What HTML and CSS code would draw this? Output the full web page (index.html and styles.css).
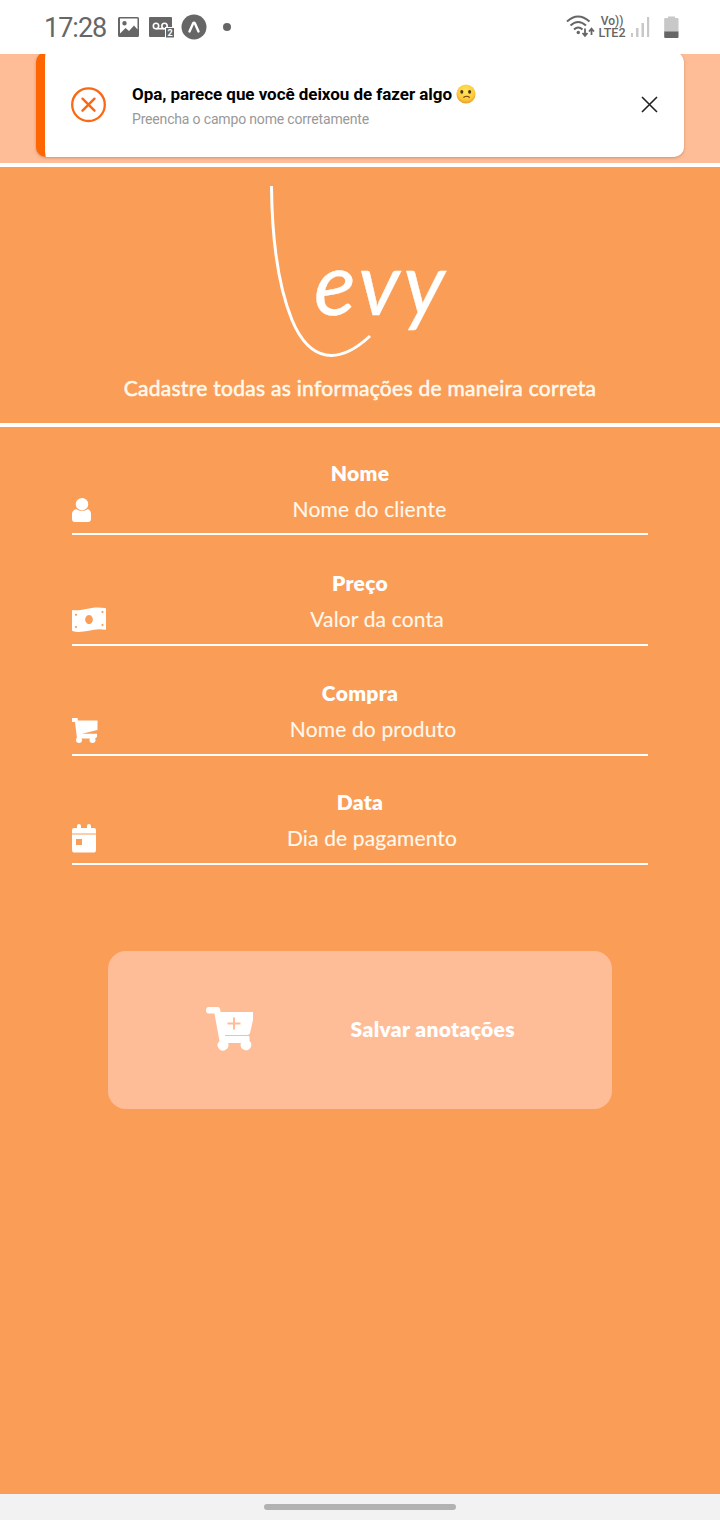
FILE: index.html
```html
<!DOCTYPE html>
<html lang="pt-BR">
<head>
<meta charset="utf-8">
<title>Levy</title>
<link rel="stylesheet" href="styles.css">
</head>
<body>
<div class="screen">
  <div class="status">
    <div class="status-left">
      <span class="clock">17:28</span>
      <svg class="i-image" width="21" height="20" viewBox="0 0 21 20"><path fill="#666" fill-rule="evenodd" d="M1.500 0h18a1.500 1.500 0 0 1 1.500 1.500v17a1.500 1.500 0 0 1-1.500 1.500h-18a1.500 1.500 0 0 1-1.500-1.500v-17a1.500 1.500 0 0 1 1.500-1.500zM2 16.500l5.500-5.500 3.500 3 5-5.500 3.500 4v-11H2zM6.500 4a2.200 2.200 0 1 1 0 4.400 2.200 2.200 0 0 1 0-4.400z"/></svg>
      <svg class="i-vm" width="26" height="22" viewBox="0 0 26 22"><rect width="23" height="20" rx="1" fill="#666"/><g fill="none" stroke="#fff" stroke-width="1.600"><circle cx="7" cy="9" r="2.700"/><circle cx="15.500" cy="9" r="2.700"/><path d="M7 11.700h8.500"/></g><rect x="16.500" y="10.500" width="9" height="10.500" fill="#666" stroke="#fff"/><text x="18.400" y="19.200" class="vm-num">2</text></svg>
      <svg class="i-expo" width="26" height="26" viewBox="0 0 26 26"><circle cx="13" cy="13" r="12.500" fill="#666"/><path d="M8.500 17.500L12 9.500q1-1.500 2 0l3.500 8" fill="none" stroke="#fff" stroke-width="2.400" stroke-linecap="round"/></svg>
      <span class="dot"></span>
    </div>
    <div class="status-right">
      <svg width="29" height="24" viewBox="0 0 29 24" fill="none" stroke="#666" stroke-width="2"><path d="M1 6.500Q12 -3.500 23.500 6.500M4.500 10.500Q12 3.500 20 10.500M8 14.500Q12.300 10.500 16.500 14.500"/><circle cx="12.300" cy="17.500" r="1.700" fill="#666" stroke="none"/><path stroke-width="1.800" d="M19 13.500v7M16.500 18l2.500 2.800 2.500-2.800M25.500 20v-6M23 16.500l2.500-2.800 2.500 2.800"/></svg>
      <div class="lte"><span class="vo">Vo))</span><span>LTE2</span></div>
      <svg class="bars" width="19" height="21" viewBox="0 0 19 21" fill="#c8c8c8"><path d="M0 16h2v4H0zM5 11h2.500v9H5zM10.500 6H13v14h-2.500zM16 0h2.200v20H16z"/></svg>
      <svg class="battery" width="15" height="23" viewBox="0 0 15 23"><path fill="#c8c8c8" d="M4 2V.5h7V2h2.500q1 0 1 1v13H.2V3q0-1 1-1z"/><path fill="#666" d="M.2 15.500h14.300V21q0 1-1 1H1.200q-1 0-1-1z"/></svg>
    </div>
  </div>

  <div class="header">
    <div class="toast">
      <svg class="toast-icon" width="35" height="36" viewBox="0 0 35 36" fill="none" stroke="#fa6814"><circle cx="17.500" cy="17.700" r="16.300" stroke-width="2.300"/><path stroke-width="2.400" stroke-linecap="round" d="M11.500 11.700l12 12M23.500 11.700l-12 12"/></svg>
      <div class="toast-body">
        <div class="toast-title"><span>Opa, parece que você deixou de fazer algo</span>
          <svg class="emoji" width="20" height="20" viewBox="0 0 20 20"><defs><radialGradient id="face" cx=".5" cy=".35" r=".65"><stop offset="0" stop-color="#ffe75a"/><stop offset=".7" stop-color="#fcc83a"/><stop offset="1" stop-color="#e79a2b"/></radialGradient></defs><circle cx="10" cy="10" r="9.600" fill="url(#face)"/><g fill="#46301a"><ellipse cx="5.800" cy="7.800" rx="1.500" ry="1.900"/><ellipse cx="13.600" cy="7.800" rx="1.500" ry="1.900"/></g><path d="M7.800 13.300q3-2 5.500 0" fill="none" stroke="#6b3f14" stroke-width="1.100" stroke-linecap="round"/></svg>
        </div>
        <div class="toast-text">Preencha o campo nome corretamente</div>
      </div>
      <svg class="close" width="17" height="17" viewBox="0 0 17 17" stroke="#222" stroke-width="1.600"><path d="M1 1l15 15M16 1L1 16"/></svg>
    </div>
  </div>

  <div class="hero">
    <svg class="logo" width="190" height="180" viewBox="0 0 190 180"><path class="swash" d="M6.500 6C7 60 14 108 27 140C45 183 74 185 105 156"/><text class="wordmark" x="49" y="135" textLength="131" lengthAdjust="spacing">evy</text></svg>
    <div class="subtitle">Cadastre todas as informações de maneira correta</div>
  </div>

  <div class="form">
    <div class="field">
      <div class="label">Nome</div>
      <div class="row"><svg width="19" height="24" viewBox="0 0 19 24" fill="#fff"><circle cx="10" cy="6.200" r="6.200"/><path d="M4 11q6 4 12 0 3 1.500 3 5v5q0 3-3 3H3q-3 0-3-3v-5q0-3.500 4-5z"/></svg><span class="input">Nome do cliente</span></div>
    </div>
    <div class="field">
      <div class="label">Preço</div>
      <div class="row row-tall"><svg width="34" height="25" viewBox="0 0 34 25"><path fill="#fff" fill-rule="evenodd" d="M1 3C10 4.500 19-1.500 33 1q1 .2 1 1v20q0 1-1 .8C22 20 12 27 1 24.300q-1-.3-1-1V4q0-1 1-1zM17 8a3.800 4.500 0 1 0 .01 0zM4 6.700a1 1 0 1 0 .01 0zM4 19a1 1 0 1 0 .01 0zM30.500 4a1 1 0 1 0 .01 0zM30.500 17a1 1 0 1 0 .01 0z"/></svg><span class="input">Valor da conta</span></div>
    </div>
    <div class="field field-short">
      <div class="label">Compra</div>
      <div class="row row-tall"><svg class="i-cart" width="26" height="25" viewBox="0 0 26 25" fill="#fff"><path d="M0 0h5.500L6 2.500h19.500V12L10 15.800h15V19l-2 1.500H5L3 4H0z"/><circle cx="7" cy="22" r="3"/><circle cx="20.500" cy="22" r="3"/></svg><span class="input">Nome do produto</span></div>
    </div>
    <div class="field">
      <div class="label">Data</div>
      <div class="row row-tall"><svg width="24" height="29" viewBox="0 0 24 29" fill="#fff"><path d="M0 9.500V6q0-2 2-2h3V2q0-2 2-2t2 2v2h6V2q0-2 2-2t2 2v2h3q2 0 2 2v3.500z"/><path fill-rule="evenodd" d="M0 10.500h24V26q0 2.500-2 2.500H2q-2 0-2-2.500zM4 15v6h6v-6z"/></svg><span class="input">Dia de pagamento</span></div>
    </div>
    <div class="save">
      <svg width="48" height="44" viewBox="0 0 48 44"><path fill="#fff" fill-rule="evenodd" d="M3 0h9q2 0 2.200 2.500L14.500 5H47v8l-3 13q-.6 2-2.500 2H19v1h23.500q1 0 1 1v4a5.300 5.300 0 1 1-8.500 2H22a5.400 5.400 0 1 1-8.500-2L8.500 6.500H3Q0 6.500 0 3.300T3 0zM27 10.500v5h-5.500v2H27v5h2v-5h5.500v-2H29v-5z"/></svg>
      <span class="save-text">Salvar anotações</span>
    </div>
  </div>
  <div class="navbar"><span class="pill"></span></div>
</div>
</body>
</html>
```
FILE: styles.css
```css
* { box-sizing: border-box; }
body { margin: 0; }
svg { display: block; flex: none; }
.screen { width: 720px; height: 1520px; display: flex; flex-direction: column; background: #fa9d57; font-family: Lato, "Liberation Sans", sans-serif; overflow: hidden; }

.status { height: 54px; flex: none; background: #fff; display: flex; justify-content: space-between; padding: 0 41px 0 44px; color: #666; }
.status-left, .status-right { display: flex; align-items: center; }
.clock { width: 62px; font: 27px/52px Roboto, sans-serif; letter-spacing: -1px; padding-top: 1px; }
.i-image { margin-left: 12px; }
.i-vm { margin-left: 10px; margin-top: 1px; }
.vm-num { font: bold 9px Roboto, sans-serif; fill: #fff; }
.i-expo { margin-left: 6px; }
.dot { width: 8px; height: 8px; border-radius: 50%; background: #666; margin-left: 16px; }
.lte { display: flex; flex-direction: column; align-items: center; font: 500 12.5px/12px Roboto, sans-serif; margin-left: 3px; width: 28px; }
.vo { font-size: 12px; }
.bars { margin-left: 5px; }
.battery { margin-left: 14px; }

.header { height: 113px; flex: none; background: #ffbd97; border-bottom: 4px solid #fff; padding: 0 36px; overflow: hidden; }
.toast { height: 105px; margin-top: -2px; background: #fff; border-radius: 10px; border-left: 9px solid #ff6500; box-shadow: 0 1px 3px rgba(90, 50, 20, .3); display: flex; align-items: center; padding: 0 26px; }
.toast-body { margin-left: 26px; flex: 1; padding-top: 5px; }
.toast-title { display: flex; align-items: center; gap: 4px; font: bold 17px/25px Roboto, sans-serif; letter-spacing: -.05px; color: #000; white-space: nowrap; }
.emoji { margin-bottom: 2px; }
.toast-text { font: 14px/25px Roboto, sans-serif; letter-spacing: -.17px; color: #999; }

.hero { height: 260px; flex: none; border-bottom: 4px solid #fff; display: flex; flex-direction: column; align-items: center; padding-top: 13px; }
.swash { fill: none; stroke: #fff; stroke-width: 3; }
.wordmark { font: italic 87px Lato, sans-serif; fill: #fff; stroke: #fff; stroke-width: .4; }
.subtitle { margin-top: 14px; font-size: 21px; line-height: 28px; color: #fff8ec; white-space: nowrap; letter-spacing: .29px; -webkit-text-stroke: .55px #fff8ec; }

.form { flex: 1; padding: 32px 72px 0; }
.field { height: 110px; }
.field-short { height: 109px; }
.label { height: 30px; font-size: 21px; font-weight: 800; line-height: 28px; text-align: center; color: #fff; letter-spacing: .3px; }
.row { height: 46px; display: flex; align-items: center; border-bottom: 2px solid #fff; padding-bottom: 2px; }
.row-tall { height: 47px; padding-bottom: 4px; }
.i-cart { margin-top: 2px; }
.input { flex: 1; text-align: center; font-size: 21px; line-height: 26px; color: #fff8ec; padding-bottom: 2px; letter-spacing: .15px; -webkit-text-stroke: .15px #fff8ec; }
.save { width: 504px; height: 158px; margin: 53px auto 0; background: #ffbd97; border-radius: 18px; display: flex; align-items: center; justify-content: space-between; padding: 0 97px 2px 98px; color: #fff; font-weight: 800; font-size: 21px; letter-spacing: .35px; }
.save-text { padding-bottom: 2px; }
.navbar { height: 26px; flex: none; background: #f2f2f2; display: flex; align-items: center; justify-content: center; }
.pill { width: 192px; height: 6px; border-radius: 3px; background: #b2b2b2; }
```
